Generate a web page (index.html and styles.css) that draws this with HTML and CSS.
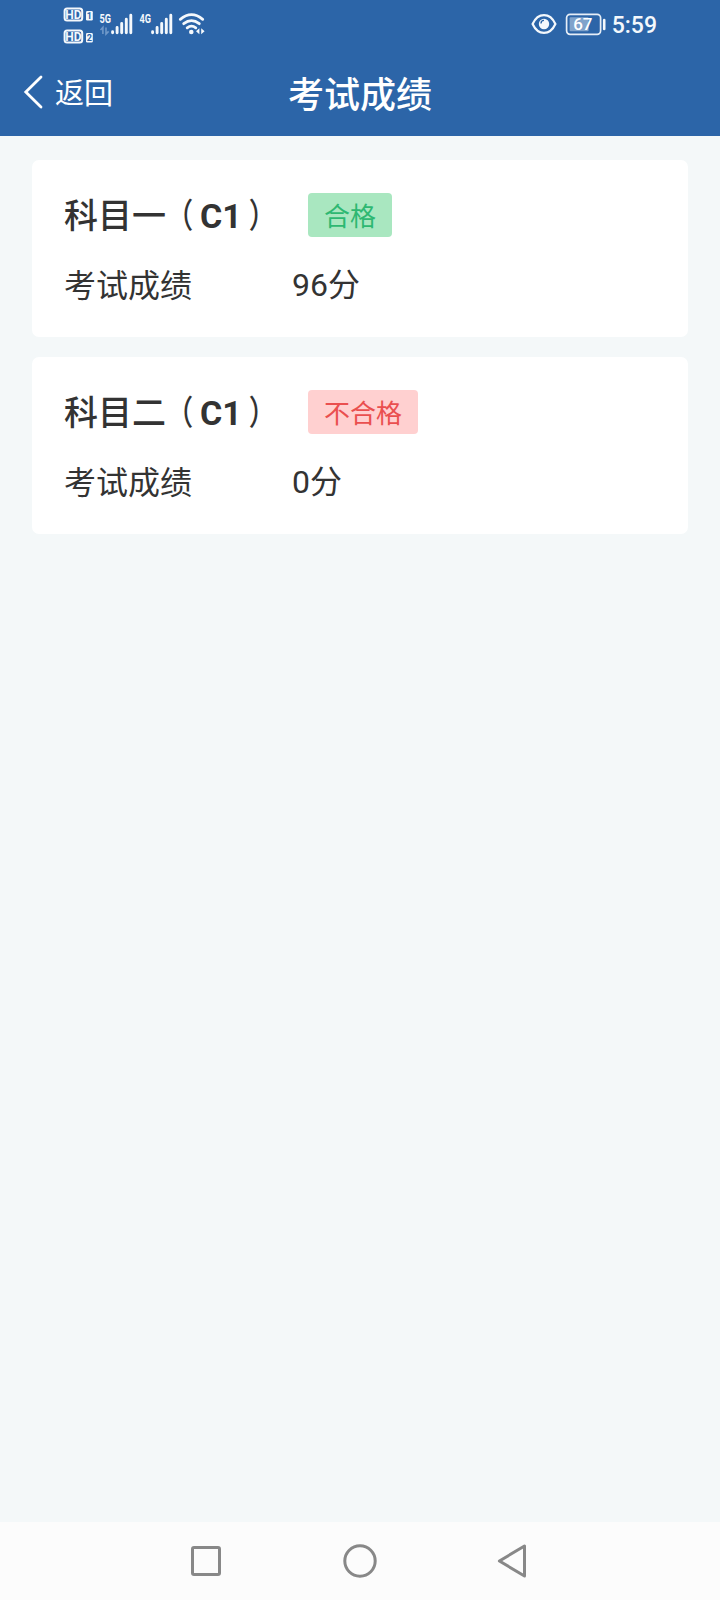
FILE: index.html
```
<!DOCTYPE html>
<html lang="zh-CN">
<head>
    <meta charset="UTF-8">
    <meta name="viewport" content="width=device-width, initial-scale=1.0">
    <title>考试成绩</title>
    <link rel="stylesheet" href="styles.css">
</head>
<body>
    <!-- Status bar -->
    <div class="status-bar">
        <div class="status-group">
            <svg class="icon-hd" width="30" height="48" viewBox="-1 0 30 48">
                <rect x="0.6" y="8.4" width="17.6" height="12" rx="2.5" fill="none" stroke="#f4f8fc" stroke-width="2"/>
                <text x="9.4" y="18.6" class="hd-text">HD</text>
                <rect x="22" y="11" width="6.8" height="9.4" rx="1.2" fill="#f4f8fc"/>
                <text x="25.3" y="19" class="sim-text">1</text>
                <rect x="0.6" y="30.4" width="17.6" height="12" rx="2.5" fill="none" stroke="#f4f8fc" stroke-width="2"/>
                <text x="9.4" y="40.6" class="hd-text">HD</text>
                <rect x="22" y="33" width="6.8" height="9.4" rx="1.2" fill="#f4f8fc"/>
                <text x="25.3" y="41" class="sim-text">2</text>
            </svg>
            <svg class="icon-signal" width="34" height="48" viewBox="0 0 34 48">
                <text x="-0.5" y="23" class="net-text" textLength="11.5" lengthAdjust="spacingAndGlyphs">5G</text>
                <path d="M0.5 30l2.4-2.6V34M6 27.4V34l2.6-2.6" class="data-arrows"/>
                <path d="M12.6 31.7v1M17.1 27.5v5.2M21.7 23.5v9.2M26.3 19.3v13.4M30.8 15.2v17.5" class="bars"/>
            </svg>
            <svg class="icon-signal" width="34" height="48" viewBox="0 0 34 48">
                <text x="-0.5" y="23" class="net-text" textLength="11.5" lengthAdjust="spacingAndGlyphs">4G</text>
                <path d="M12.6 31.7v1M17.1 27.5v5.2M21.7 23.5v9.2M26.3 19.3v13.4M30.8 15.2v17.5" class="bars"/>
            </svg>
            <svg class="icon-wifi" width="27" height="48" viewBox="0 0 27 48">
                <path d="M1.3 19.3Q12.5 10 23.7 19.3M4.7 23.7Q12.5 17.5 20.3 23.7M8.2 27.8Q12.5 24.4 16.8 27.8" fill="none" stroke="#f4f8fc" stroke-width="2.8" stroke-linecap="round"/>
                <circle cx="12.3" cy="32" r="2.3" fill="#f4f8fc"/>
                <path d="M17 31.2l3.4-3v6zM25.6 31.2l-3.4-3v6z" fill="#f4f8fc"/>
            </svg>
        </div>
        <div class="status-group">
            <svg class="icon-eye" width="26" height="48" viewBox="0 0 26 48">
                <path d="M1.6 24C7 12.2 19 12.2 24.4 24C19 35.8 7 35.8 1.6 24Z" fill="none" stroke="#f4f8fc" stroke-width="2.2"/>
                <circle cx="13" cy="24" r="5.2" fill="#f4f8fc"/>
                <path d="M10 23.4a3 3 0 0 1 3-3" fill="none" stroke="#2c65a8" stroke-width="1.3"/>
            </svg>
            <svg class="icon-battery" width="41" height="48" viewBox="0 0 41 48">
                <rect x="1.6" y="14.3" width="34" height="20" rx="3.5" fill="none" stroke="#e6eef7" stroke-width="1.7"/>
                <rect x="4.6" y="17.3" width="19" height="14" rx="1" fill="#80a3cb"/>
                <path d="M39.2 20v9" stroke="#f4f8fc" stroke-width="2.6" stroke-linecap="round"/>
                <text x="17.8" y="30.4" class="battery-text">67</text>
            </svg>
            <span class="clock">5:59</span>
        </div>
    </div>

    <!-- Title bar -->
    <header class="nav-bar">
        <a class="back">
            <svg width="20" height="36" viewBox="0 0 20 36">
                <path d="M18 3L2.8 18L18 33" fill="none" stroke="#fff" stroke-width="2.8" stroke-linecap="round"/>
            </svg>
            <span class="back-text">返回</span>
        </a>
        <h1 class="nav-title">考试成绩</h1>
    </header>

    <!-- Exam results -->
    <main class="results">
        <section class="card">
            <div class="card-head">
                <h2 class="subject">科目一<span class="paren paren-open">（</span><b>C1</b><span class="paren paren-close">）</span></h2>
                <span class="tag tag-pass">合格</span>
            </div>
            <div class="score-row">
                <span class="score-label">考试成绩</span>
                <span class="score">96分</span>
            </div>
        </section>
        <section class="card">
            <div class="card-head">
                <h2 class="subject">科目二<span class="paren paren-open">（</span><b>C1</b><span class="paren paren-close">）</span></h2>
                <span class="tag tag-fail">不合格</span>
            </div>
            <div class="score-row">
                <span class="score-label">考试成绩</span>
                <span class="score">0分</span>
            </div>
        </section>
    </main>

    <!-- System navigation -->
    <nav class="system-nav">
        <svg width="36" height="36" viewBox="0 0 36 36">
            <rect x="4.5" y="4.5" width="27" height="27" rx="1.5"/>
        </svg>
        <svg width="36" height="36" viewBox="0 0 36 36">
            <circle cx="18" cy="18" r="15.2"/>
        </svg>
        <svg width="36" height="36" viewBox="0 0 36 36">
            <path d="M28.5 3V33L3.4 18Z" stroke-linejoin="round"/>
        </svg>
    </nav>
</body>
</html>
```

FILE: styles.css
```
body {
    margin: 0;
    height: 1600px;
    display: flex;
    flex-direction: column;
    overflow: hidden;
    background: #f4f8f9;
    color: #333;
    font-family: Roboto, "Noto Sans CJK SC", sans-serif;
}

/* Status bar */
.status-bar {
    height: 48px;
    display: flex;
    justify-content: space-between;
    padding: 0 63px;
    background: #2c65a8;
    color: #f4f8fc;
}

.status-group {
    display: flex;
}

.status-group svg {
    overflow: visible;
}

.icon-signal {
    margin-left: 6px;
}

.icon-hd + .icon-signal {
    margin-left: 7px;
}

.icon-wifi {
    margin-left: 5px;
}

.icon-battery {
    margin-left: 8px;
}

.hd-text {
    font-size: 12px;
    font-weight: 700;
    text-anchor: middle;
    fill: #f4f8fc;
}

.sim-text {
    font-size: 9px;
    font-weight: 700;
    text-anchor: middle;
    fill: #2c65a8;
}

.net-text {
    font-size: 13px;
    font-weight: 700;
    fill: #f4f8fc;
}

.data-arrows {
    fill: none;
    stroke: #7099c9;
    stroke-width: 1.6;
}

.bars {
    fill: none;
    stroke: #f4f8fc;
    stroke-width: 2.9;
    stroke-linecap: round;
}

.battery-text {
    font-size: 17px;
    font-weight: 500;
    text-anchor: middle;
    fill: #fff;
}

.clock {
    margin-left: 6px;
    font-size: 23px;
    font-weight: 500;
    line-height: 51px;
}

/* Title bar */
.nav-bar {
    height: 88px;
    display: grid;
    grid-template-columns: 1fr auto 1fr;
    align-items: center;
    background: #2c65a8;
    color: #fff;
}

.back {
    display: flex;
    align-items: center;
    gap: 12px;
    padding-left: 23px;
    font-size: 29px;
    line-height: 40px;
}

.back-text {
    padding-top: 4px;
}

.nav-title {
    margin: 0;
    padding-top: 7px;
    font-size: 36px;
    font-weight: 500;
    line-height: 52px;
}

/* Result cards */
.results {
    flex: 1;
    display: flex;
    flex-direction: column;
    gap: 20px;
    padding: 24px 32px;
}

.card {
    height: 177px;
    box-sizing: border-box;
    padding: 33px 32px 0;
    background: #fff;
    border-radius: 7px;
}

.card-head {
    display: flex;
    align-items: center;
    height: 44px;
}

.subject {
    width: 244px;
    margin: 0;
    font-size: 34px;
    font-weight: 500;
    line-height: 47px;
    padding-top: 3px;
    white-space: nowrap;
}

.subject b {
    font-weight: 700;
}

/* half-width brackets, centered in a full-width cell */
.paren {
    display: inline-block;
    width: 17px;
    font-feature-settings: "halt";
    transform: scaleX(0.8);
}

.paren-open {
    margin: 0 5px 0 12px;
}

.paren-close {
    margin: 0 12px 0 5px;
}

.tag {
    height: 44px;
    box-sizing: border-box;
    padding: 2px 16px 0;
    border-radius: 4px;
    font-size: 26px;
    line-height: 44px;
}

.tag-pass {
    background: #a9e7c0;
    color: #2eb872;
}

.tag-fail {
    background: #ffd0d0;
    color: #ea4f4f;
}

.score-row {
    display: flex;
    margin-top: 24px;
    font-size: 32px;
    line-height: 48px;
}

.score-label {
    width: 228px;
    padding-top: 1px;
}

/* System navigation */
.system-nav {
    height: 78px;
    display: flex;
    justify-content: center;
    align-items: center;
    gap: 118px;
    background: #fcfcfc;
}

.system-nav svg {
    fill: none;
    stroke: #888;
    stroke-width: 3;
}
```
